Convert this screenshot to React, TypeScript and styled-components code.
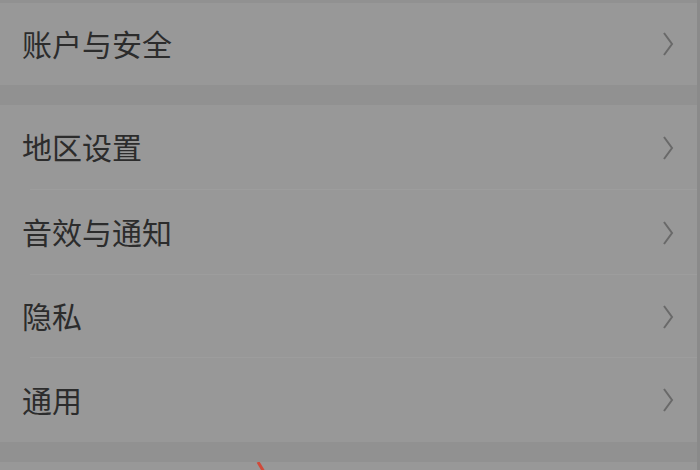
import styled, { createGlobalStyle } from 'styled-components'

const Global = createGlobalStyle`
  html, body {
    margin: 0;
    padding: 0;
    background: #909090;
  }
  body {
    font-family: "Noto Sans CJK SC", "Noto Sans", sans-serif;
  }
`

const Page = styled.div`
  width: 700px;
  height: 470px;
  overflow: hidden;
  background: #919191;
  padding-top: 3px;
  box-sizing: border-box;
  border-right: 3px solid #8a8a8a;
`

const Group = styled.div<{ $gap?: number }>`
  background: #989898;
  margin-bottom: ${p => p.$gap ?? 20}px;
`

const Row = styled.div<{ $h: number; $last?: boolean }>`
  height: ${p => p.$h}px;
  display: flex;
  align-items: center;
  justify-content: space-between;
  padding: 0 22px 0 22px;
  box-sizing: border-box;
  position: relative;

  &::after {
    content: '';
    display: ${p => (p.$last ? 'none' : 'block')};
    position: absolute;
    left: 30px;
    right: 0;
    bottom: 0;
    height: 1px;
    background: #9d9d9d;
  }
`

const Label = styled.span`
  font-size: 30px;
  line-height: 1;
  color: #2c2c2c;
  margin-top: -3px;
`

const Chevron = () => (
  <svg width="14" height="26" viewBox="0 0 14 26">
    <polyline points="3,2 11,13 3,24" fill="none" stroke="#696969" strokeWidth="2" />
  </svg>
)

const Mark = styled.div`
  height: 8px;
  padding-left: 256px;

  svg {
    display: block;
  }
`

const items = [
  { group: ['账户与安全'], h: [82] },
  { group: ['地区设置', '音效与通知', '隐私', '通用'], h: [85, 85, 83, 84] },
]

export default function App() {
  return (
    <Page>
      <Global />
      {items.map((g, gi) => (
        <Group key={gi}>
          {g.group.map((t, i) => (
            <Row key={t} $h={g.h[i]} $last={i === g.group.length - 1}>
              <Label>{t}</Label>
              <Chevron />
            </Row>
          ))}
        </Group>
      ))}
      <Group $gap={0}>
        <Mark>
          <svg width="12" height="10" viewBox="0 0 12 10">
            <line x1="2" y1="0" x2="8" y2="10" stroke="#d04a3a" strokeWidth="3" />
          </svg>
        </Mark>
      </Group>
    </Page>
  )
}
